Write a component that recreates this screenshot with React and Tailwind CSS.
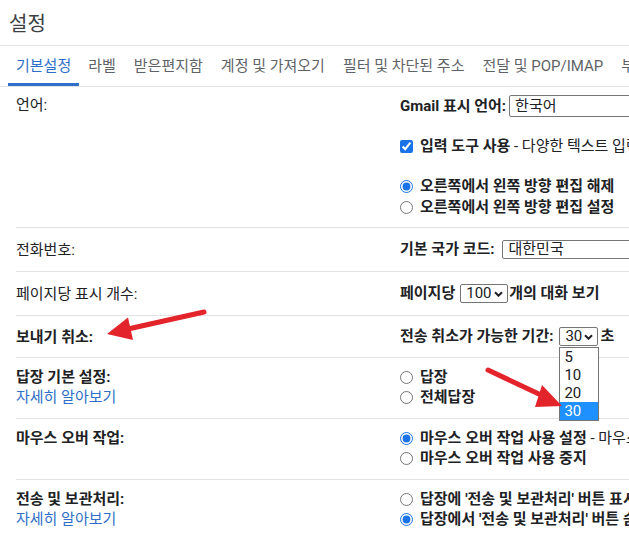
import { useState } from 'react';

const tabs = ['기본설정', '라벨', '받은편지함', '계정 및 가져오기', '필터 및 차단된 주소', '전달 및 POP/IMAP', '부가기능'];

function Chevron() {
    return (
        <svg width="9" height="6" viewBox="0 0 9 6" className="shrink-0">
            <path d="M1 1.2 L4.5 4.7 L8 1.2" fill="none" stroke="#202124" strokeWidth="2" />
        </svg>
    );
}

function SelectBox({ value, className }) {
    return (
        <div className={`flex items-center justify-between border border-[#767676] rounded-[2px] bg-white pl-[5px] pr-[4px] ${className}`}>
            <span className="font-normal">{value}</span>
            <Chevron />
        </div>
    );
}

function Radio({ name, checked, children }) {
    return (
        <label className="flex items-center gap-[7px] h-[20px] whitespace-nowrap">
            <input type="radio" name={name} defaultChecked={checked} className="m-0 w-[13px] h-[13px] shrink-0 accent-[#1a73e8]" />
            <span>{children}</span>
        </label>
    );
}

function Row({ label, link, bold = true, last = false, className = '', children }) {
    return (
        <div className={`flex ml-4 ${last ? '' : 'border-b border-[#e3e3e3]'} ${className}`}>
            <div className="w-[384px] shrink-0">
                <div className={`leading-[20px] ${bold ? 'font-bold' : ''}`}>{label}</div>
                {link && <div className="leading-[20px] text-[#2f6fc9]">{link}</div>}
            </div>
            <div className="flex-1 min-w-0">{children}</div>
        </div>
    );
}

export default function App() {
    const [active] = useState(0);

    return (
        <div className="relative w-[629px] h-[536px] overflow-hidden bg-white text-[15px] text-[#202124] font-['Roboto','Noto_Sans_CJK_KR',sans-serif]">
            <div className="h-[46px] border-b border-[#e3e3e3] pl-[9px] pt-[2px] flex items-center text-[20px] text-[#3c4043]">
                설정
            </div>

            <div className="h-[41px] border-b border-[#e3e3e3] flex pl-2 whitespace-nowrap overflow-hidden">
                {tabs.map((t, i) => (
                    <div
                        key={t}
                        className={`h-full flex items-center shrink-0 ${i === 0 ? 'px-2' : 'px-[9px]'} ${i === active ? 'text-[#2f6fc9] shadow-[inset_0_-3px_0_#2f6fc9]' : 'text-[#5f6368]'}`}
                    >
                        {t}
                    </div>
                ))}
            </div>

            {/* 언어 */}
            <Row label="언어:" bold={false} className="h-[141px] pt-2">
                <div className="flex items-center h-[22px] whitespace-nowrap">
                    <span className="font-bold">Gmail 표시 언어:</span>
                    <div className="ml-[3px] h-[22px] w-[200px] shrink-0 border border-[#767676] rounded-[2px] pl-[5px] flex items-center">한국어</div>
                </div>
                <label className="mt-[19px] flex items-center gap-[7px] h-[21px] whitespace-nowrap">
                    <input type="checkbox" defaultChecked className="m-0 w-[13px] h-[13px] shrink-0 accent-[#1a73e8]" />
                    <span><b>입력 도구 사용</b> - 다양한 텍스트 입력 방법을 사용하여 원하는 언어로 입력할 수 있습니다.</span>
                </label>
                <div className="mt-[19px] font-bold">
                    <label className="flex items-center gap-[7px] h-[21px] whitespace-nowrap">
                        <input type="radio" name="rtl" defaultChecked className="m-0 w-[13px] h-[13px] shrink-0 accent-[#1a73e8]" />
                        <span>오른쪽에서 왼쪽 방향 편집 해제</span>
                    </label>
                    <label className="flex items-center gap-[7px] h-[21px] whitespace-nowrap">
                        <input type="radio" name="rtl" className="m-0 w-[13px] h-[13px] shrink-0 accent-[#1a73e8]" />
                        <span>오른쪽에서 왼쪽 방향 편집 설정</span>
                    </label>
                </div>
            </Row>

            {/* 전화번호 */}
            <div className="flex ml-4 border-b border-[#e3e3e3] h-[44px] items-center">
                <div className="w-[384px] shrink-0 leading-[20px]">전화번호:</div>
                <div className="flex-1 min-w-0 flex items-center whitespace-nowrap">
                    <span className="font-bold">기본 국가 코드:</span>
                    <div className="ml-[8px] h-[19px] w-[200px] shrink-0 border border-[#767676] rounded-[2px] pl-[5px] flex items-center">대한민국</div>
                </div>
            </div>

            {/* 페이지당 */}
            <div className="flex ml-4 border-b border-[#e3e3e3] h-[44px] items-center">
                <div className="w-[384px] shrink-0 leading-[20px]">페이지당 표시 개수:</div>
                <div className="flex-1 min-w-0 flex items-center whitespace-nowrap font-bold">
                    <span>페이지당</span>
                    <SelectBox value="100" className="ml-[5px] w-[48px] h-[19px]" />
                    <span className="ml-[1px]">개의 대화 보기</span>
                </div>
            </div>

            {/* 보내기 취소 */}
            <div className="flex ml-4 border-b border-[#e3e3e3] h-[42px] items-center">
                <div className="w-[384px] shrink-0 leading-[20px] font-bold">보내기 취소:</div>
                <div className="flex-1 min-w-0 flex items-center whitespace-nowrap font-bold">
                    <span>전송 취소가 가능한 기간:</span>
                    <div className="relative ml-[6px]">
                        <SelectBox value="30" className="w-[39px] h-[19px]" />
                        <div className="absolute left-0 top-[20px] z-10 w-[40px] border border-[#767676] bg-white font-normal">
                            {['5', '10', '20', '30'].map((v) => (
                                <div key={v} className={`h-[18px] leading-[18px] pl-[4px] ${v === '30' ? 'bg-[#1e90ff] text-white' : ''}`}>{v}</div>
                            ))}
                        </div>
                    </div>
                    <span className="ml-[2px]">초</span>
                </div>
            </div>

            {/* 답장 */}
            <Row label="답장 기본 설정:" link="자세히 알아보기" className="h-[61px] pt-[9px]">
                <div className="font-bold">
                    <Radio name="reply">답장</Radio>
                    <Radio name="reply">전체답장</Radio>
                </div>
            </Row>

            {/* 마우스 오버 */}
            <Row label="마우스 오버 작업:" className="h-[61px] pt-[9px]">
                <Radio name="hover" checked>
                    <b>마우스 오버 작업 사용 설정</b> - 마우스를 올려 보관처리, 읽은 상태로 표시, 일시 중지 작업을 빠르게 실행할 수 있습니다.
                </Radio>
                <Radio name="hover"><b>마우스 오버 작업 사용 중지</b></Radio>
            </Row>

            {/* 전송 및 보관처리 */}
            <Row label="전송 및 보관처리:" link="자세히 알아보기" last className="pt-[9px]">
                <div className="font-bold">
                    <Radio name="sa">답장에 '전송 및 보관처리' 버튼 표시</Radio>
                    <Radio name="sa" checked>답장에서 '전송 및 보관처리' 버튼 숨기기</Radio>
                </div>
            </Row>

            {/* annotation arrows */}
            <svg className="absolute inset-0 pointer-events-none z-20" width="629" height="536" viewBox="0 0 629 536">
                <line x1="204" y1="312" x2="128" y2="329" stroke="#e3242b" strokeWidth="5" strokeLinecap="round" />
                <polygon points="107,334 128,317.5 133,340" fill="#e3242b" />
                <line x1="488" y1="370" x2="541" y2="395" stroke="#e3242b" strokeWidth="5" strokeLinecap="round" />
                <polygon points="562,406 542,385 535,407" fill="#e3242b" />
            </svg>
        </div>
    );
}
